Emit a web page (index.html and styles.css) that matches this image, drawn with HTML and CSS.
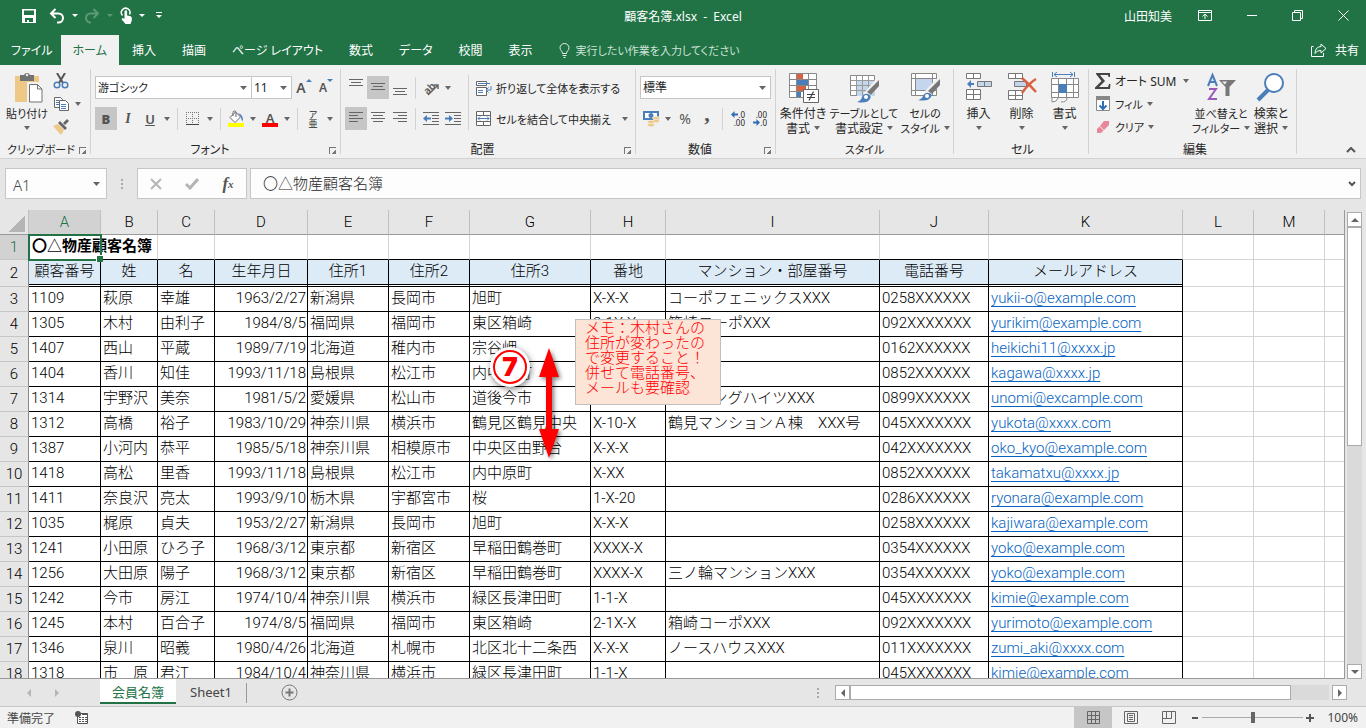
FILE: index.html
```html
<!DOCTYPE html>
<html lang="ja">
<head>
    <meta charset="UTF-8">
    <meta name="viewport" content="width=device-width, initial-scale=1.0">
    <title>顧客名簿.xlsx - Excel</title>
    <link rel="stylesheet" href="styles.css">
</head>
<body>
    <header class="titlebar">
        <div class="quick-access">
            <button class="qa-btn" aria-label="上書き保存"><svg width="16" height="16" viewBox="0 0 16 16"><path fill="#fff" fill-rule="evenodd" d="M1 1h14v14H1zM3 2.500v4.500h10V2.500zM4 10v4h2v-2h2v2h4v-4z"/></svg></button>
            <button class="qa-btn" aria-label="元に戻す"><svg width="16" height="16" viewBox="0 0 16 16" fill="none" stroke="#fff" stroke-width="2"><path d="M6.500 1 2 5.500 6.500 10M2 5.500h7.500a4.500 4.500 0 0 1 0 9H8"/></svg></button>
            <button class="caret-btn" aria-label="元に戻すの一覧"><span class="caret"></span></button>
            <button class="qa-btn" aria-label="やり直し" disabled><svg width="16" height="16" viewBox="0 0 16 16" fill="none" stroke="#5c9a78" stroke-width="2"><path d="M9.500 1 14 5.500 9.500 10M14 5.500H6.500a4.500 4.500 0 0 0 0 9H7"/></svg></button>
            <button class="caret-btn dim" aria-label="やり直しの一覧" disabled><span class="caret"></span></button>
            <button class="qa-btn qa-touch" aria-label="タッチ/マウス モード"><svg width="14" height="17" viewBox="0 0 14 17"><path d="M3.500 8.500A4.300 4.300 0 1 1 10.500 7.500" fill="none" stroke="#fff" stroke-width="1.500"/><path fill="#fff" d="M5.500 4.500a1.300 1.300 0 0 1 2.600 0V8.500l3.500.8q1.200.4 1.200 1.700V13.500L11.500 17H6.500L2.500 12.300l1-1.300 2 .8z"/></svg></button>
            <button class="caret-btn" aria-label="モードの一覧"><span class="caret"></span></button>
            <button class="qa-btn" aria-label="クイック アクセス ツール バーのユーザー設定"><svg width="6" height="7" viewBox="0 0 6 7"><path fill="#fff" d="M0 0h6v1H0zM0 3h6L3 6z"/></svg></button>
        </div>
        <h1 class="doc-title">顧客名簿.xlsx &nbsp;-&nbsp; Excel</h1>
        <div class="window-area">
            <span class="user">山田知美</span>
            <button class="win-btn" aria-label="リボンの表示オプション"><svg width="14" height="11" viewBox="0 0 14 11" fill="none" stroke="#fff"><path d="M.5.5h13v10H.5zM.5 2.500h13M7 9V4.500M4.500 6.500 7 4l2.500 2.500"/></svg></button>
            <button class="win-btn" aria-label="最小化"><svg width="11" height="11" viewBox="0 0 11 11" stroke="#fff"><path d="M1 5.500h10"/></svg></button>
            <button class="win-btn" aria-label="元に戻す（縮小）"><svg width="11" height="11" viewBox="0 0 11 11" fill="none" stroke="#fff"><path d="M.5 2.500h8v8h-8zM2.500 2V.5h8v8H9"/></svg></button>
            <button class="win-btn" aria-label="閉じる"><svg width="11" height="11" viewBox="0 0 11 11" stroke="#fff"><path d="M.5.5l10 10M10.500.5l-10 10"/></svg></button>
        </div>
    </header>

    <nav class="tabs">
        <button class="tab tab-file">ファイル</button>
        <button class="tab active">ホーム</button>
        <button class="tab">挿入</button>
        <button class="tab">描画</button>
        <button class="tab">ページ レイアウト</button>
        <button class="tab">数式</button>
        <button class="tab">データ</button>
        <button class="tab">校閲</button>
        <button class="tab">表示</button>
        <label class="tell-me">
            <svg width="11" height="15" viewBox="0 0 11 15" fill="none" stroke="#e4efe8"><path d="M3.500 10.500C3.500 8 1 7.500 1 4.800a4.500 4.300 0 0 1 9 0C10 7.500 7.500 8 7.500 10.500zM3.500 12.500h4M4.500 14.500h2"/></svg>
            <input type="text" placeholder="実行したい作業を入力してください" aria-label="実行したい作業を入力してください">
        </label>
        <button class="share"><svg width="16" height="14" viewBox="0 0 16 14" fill="none" stroke="#fff"><path d="M2.500 3.500H.5v10h12V10M10 1l5 4.500-5 4.500V7.500Q6 7 4 10.500 4 4 10 3.500z"/></svg>共有</button>
    </nav>

    <section class="ribbon">
        <div class="group g-clipboard">
            <div class="group-body">
                <button class="big-btn"><svg width="32" height="32" viewBox="0 0 32 32"><path fill="#eec887" d="M4 5h24v26H4z"/><path fill="#737373" d="M9 4h4a3.200 3.200 0 0 1 6 0h4v6H9z"/><circle cx="16" cy="4" r="1.200" fill="#f1f1f1"/><path fill="#f1f1f1" d="M16 11h16v21H16z"/><path d="M18.500 13.500h8l4.500 4.500v13H18.500zM26.500 13.500V18H31" fill="#fff" stroke="#737373"/></svg><span class="compact">貼り付け</span><span class="caret"></span></button>
                <div class="stack">
                    <div class="stack-row"><button class="tool" aria-label="切り取り"><svg width="16" height="16" viewBox="0 0 16 16" fill="none"><path stroke="#555" stroke-width="2" d="M4 0l6 10M12 0 6 10"/><g stroke="#4a7ebb" stroke-width="1.500"><circle cx="4" cy="12" r="2.800"/><circle cx="12" cy="12" r="2.800"/></g></svg></button></div>
                    <div class="stack-row"><button class="tool" aria-label="コピー"><svg width="16" height="16" viewBox="0 0 16 16" fill="#fff" stroke="#666"><path d="M1.500 1.500h6l2 2v8h-8z"/><path stroke="#4a7ebb" d="M3 4.500h3M3 6.500h3M3 8.500h3"/><path d="M6.500 4.500h6l3 3v7h-9z"/><path stroke="#4a7ebb" d="M8 8.500h5M8 10.500h5M8 12.500h5"/></svg></button><button class="caret-btn" aria-label="コピーの一覧"><span class="caret"></span></button></div>
                    <div class="stack-row"><button class="tool" aria-label="書式のコピー/貼り付け"><svg width="16" height="16" viewBox="0 0 16 16"><path fill="#eec887" d="M0 7l5-2 6 6-3 5z"/><path fill="#666" d="M5 4l2-2 7 7-2 2zM10 4l4-4 2 2-4 4z"/></svg></button></div>
                </div>
            </div>
            <div class="caption"><span class="compact">クリップボード</span><button class="launcher" aria-label="クリップボードの詳細"></button></div>
        </div>

        <div class="group g-font">
            <div class="group-body rows">
                <div class="row">
                    <select class="combo font-name" aria-label="フォント"><option>游ゴシック</option></select>
                    <select class="combo font-size" aria-label="フォント サイズ"><option>11</option></select>
                    <button class="tool letter grow" aria-label="フォント サイズの拡大">A<i class="tri up"></i></button>
                    <button class="tool letter shrink" aria-label="フォント サイズの縮小">A<i class="tri down"></i></button>
                </div>
                <div class="row">
                    <button class="tool letter pressed" aria-pressed="true"><b>B</b></button>
                    <button class="tool letter italic">I</button>
                    <button class="tool letter"><u>U</u></button>
                    <button class="caret-btn" aria-label="下線の一覧"><span class="caret"></span></button>
                    <span class="sep"></span>
                    <button class="tool" aria-label="罫線"><svg width="14" height="14" viewBox="0 0 14 14" fill="none" stroke="#777"><path stroke-dasharray="1 1" d="M.5 0v13M6.500 0v13M12.500 0v13M0 .5h13M0 6.500h13"/><path stroke="#444" d="M0 12.500h13"/></svg></button>
                    <button class="caret-btn" aria-label="罫線の一覧"><span class="caret"></span></button>
                    <span class="sep"></span>
                    <button class="tool" aria-label="塗りつぶしの色"><svg width="18" height="18" viewBox="0 0 18 18"><path d="M3 7.500 8.500 2l5 5-5.500 5.500zM6 6V2.500a1.500 1.500 0 0 1 3 0V7" fill="#fff" stroke="#666"/><path fill="#4a7ebb" d="M11 3q5 1 5 8-2-1-2-4z"/><path fill="#ff0" d="M1 13h16v4H1z"/></svg></button>
                    <button class="caret-btn" aria-label="塗りつぶしの色の一覧"><span class="caret"></span></button>
                    <button class="tool letter font-color" aria-label="フォントの色">A</button>
                    <button class="caret-btn" aria-label="フォントの色の一覧"><span class="caret"></span></button>
                    <span class="sep"></span>
                    <button class="tool ruby">ア<br>亜</button>
                    <button class="caret-btn" aria-label="ふりがなの一覧"><span class="caret"></span></button>
                </div>
            </div>
            <div class="caption"><span>フォント</span><button class="launcher" aria-label="フォントの詳細"></button></div>
        </div>

        <div class="group g-align">
            <div class="group-body">
                <div class="rows">
                    <div class="row">
                        <button class="tool" aria-label="上揃え"><svg width="14" height="18" viewBox="0 0 14 18" stroke="#666"><path d="M0 .5h14M2 3.500h10M0 6.500h14"/></svg></button>
                        <button class="tool pressed" aria-label="上下中央揃え"><svg width="14" height="18" viewBox="0 0 14 18" stroke="#666"><path d="M0 4.500h14M2 7.500h10M0 10.500h14"/></svg></button>
                        <button class="tool" aria-label="下揃え"><svg width="14" height="18" viewBox="0 0 14 18" stroke="#666"><path d="M0 9.500h14M2 12.500h10M0 15.500h14"/></svg></button>
                        <span class="sep"></span>
                        <button class="tool" aria-label="方向"><svg width="18" height="16" viewBox="0 0 18 16"><text x="1" y="12" font-size="10" font-weight="600" font-family="Noto Sans" fill="#555" transform="rotate(-45 7 8)">ab</text><path d="M6 15 15 6M12 5h4v4" fill="none" stroke="#666" stroke-width="1.500"/></svg></button>
                        <button class="caret-btn" aria-label="方向の一覧"><span class="caret"></span></button>
                    </div>
                    <div class="row">
                        <button class="tool pressed" aria-label="左揃え"><svg width="14" height="13" viewBox="0 0 14 13" stroke="#666"><path d="M0 .5h14M0 3.500h9M0 6.500h14M0 9.500h9"/></svg></button>
                        <button class="tool" aria-label="中央揃え"><svg width="14" height="13" viewBox="0 0 14 13" stroke="#666"><path d="M0 .5h14M2 3.500h10M0 6.500h14M2 9.500h10"/></svg></button>
                        <button class="tool" aria-label="右揃え"><svg width="14" height="13" viewBox="0 0 14 13" stroke="#666"><path d="M0 .5h14M5 3.500h9M0 6.500h14M5 9.500h9"/></svg></button>
                        <span class="sep"></span>
                        <button class="tool" aria-label="インデントを減らす"><svg width="16" height="14" viewBox="0 0 16 14" stroke="#666"><path d="M0 .5h16M9 3.500h7M9 6.500h7M9 9.500h7M0 12.500h16"/><path stroke="none" fill="#4a7ebb" d="M0 6.500 4 3v2.500h4v2H4V10z"/></svg></button>
                        <button class="tool" aria-label="インデントを増やす"><svg width="16" height="14" viewBox="0 0 16 14" stroke="#666"><path d="M0 .5h16M9 3.500h7M9 6.500h7M9 9.500h7M0 12.500h16"/><path stroke="none" fill="#4a7ebb" d="M8 6.500 4 3v2.500H0v2h4V10z"/></svg></button>
                    </div>
                </div>
                <span class="sep tall"></span>
                <div class="rows">
                    <button class="text-btn"><svg width="16" height="16" viewBox="0 0 16 16" fill="none" stroke="#666"><path d="M.5 1.500h10v4H.5zM.5 7.500h10v8H.5z" fill="#fff"/><path stroke="#4a7ebb" d="M2 3.500h12M2 10.500h5M2 12.500h5M15 6v4h-5M12.500 7.500 10 10l2.500 2.500"/></svg>折り返して全体を表示する</button>
                    <div class="row">
                        <button class="text-btn"><svg width="16" height="16" viewBox="0 0 16 16" fill="#fff" stroke="#666"><path d="M.5.5h14v14H.5zM7.500.5v4M7.500 11v4M.5 4.500h14M.5 10.500h14"/><path fill="none" stroke="#4a7ebb" d="M2 7.500h11M4 5.500l-2 2 2 2M11 5.500l2 2-2 2"/></svg>セルを結合して中央揃え</button>
                        <button class="caret-btn" aria-label="結合の一覧"><span class="caret"></span></button>
                    </div>
                </div>
            </div>
            <div class="caption"><span>配置</span><button class="launcher" aria-label="配置の詳細"></button></div>
        </div>

        <div class="group g-number">
            <div class="group-body rows">
                <div class="row"><select class="combo number-format" aria-label="表示形式"><option>標準</option></select></div>
                <div class="row">
                    <button class="tool" aria-label="通貨表示形式"><svg width="17" height="17" viewBox="0 0 17 17"><path fill="#4a7ebb" d="M0 1h16v9H0z"/><path fill="#fff" d="M2 3h12v5H2z"/><circle cx="8" cy="5.500" r="2.500" fill="#4a7ebb"/><g fill="#eec887" stroke="#f1f1f1" stroke-width=".6"><ellipse cx="13" cy="8" rx="3.500" ry="1.700"/><ellipse cx="13" cy="11" rx="3.500" ry="1.700"/><ellipse cx="8" cy="12" rx="3.500" ry="1.700"/><ellipse cx="8" cy="15" rx="3.500" ry="1.700"/></g></svg></button>
                    <button class="caret-btn" aria-label="通貨の一覧"><span class="caret"></span></button>
                    <button class="tool percent">%</button>
                    <button class="tool comma">,</button>
                    <span class="sep"></span>
                    <button class="tool decimals" aria-label="小数点以下の表示桁数を増やす"><span class="with-arrow"><svg width="7" height="7" viewBox="0 0 7 7"><path fill="#2f6eb5" d="M0 3.500 3.500 0v2.500H7v2H3.500V7z"/></svg>.0</span><span>.00</span></button>
                    <button class="tool decimals" aria-label="小数点以下の表示桁数を減らす"><span>.00</span><span class="with-arrow"><svg width="7" height="7" viewBox="0 0 7 7"><path fill="#2f6eb5" d="M7 3.500 3.500 0v2.500H0v2h3.500V7z"/></svg>.0</span></button>
                </div>
            </div>
            <div class="caption"><span>数値</span><button class="launcher" aria-label="表示形式の詳細"></button></div>
        </div>

        <div class="group g-style">
            <div class="group-body">
                <button class="big-btn"><svg width="32" height="32" viewBox="0 0 32 32"><path fill="#fff" stroke="#888" d="M2.500 2.500h27v24h-27zM9.500 2.500v24M21.500 2.500v24M2.500 8.500h27M2.500 14.500h27M2.500 20.500h27"/><path fill="#d9633f" d="M10 3h6v5h-6zM10 15h9v5h-9z"/><path fill="#4a7ebb" d="M10 9h11v5H10zM10 21h4v5h-4z"/><path fill="#fff" stroke="#666" d="M16.500 18.500h15v13h-15z"/><path stroke="#444" stroke-width="1.200" d="M20 23.500h8M20 26.500h8M26.500 20.500l-4.500 9"/></svg><span>条件付き</span><span>書式<span class="caret"></span></span></button>
                <button class="big-btn wide"><svg width="32" height="32" viewBox="0 0 32 32"><path fill="#fff" stroke="#888" d="M2.500 4.500h24v20h-24z"/><path fill="#c3d6ec" d="M9 10h18v15H9z"/><path fill="none" stroke="#999" d="M2.500 9.500h24M2.500 14.500h24M2.500 19.500h24M8.500 4.500v20M14.500 4.500v20M20.500 4.500v20"/><path stroke="#f1f1f1" stroke-width="7" d="M30 11 18 25"/><path fill="#777" d="M31 9v6l-8 9-4-3z"/><path fill="#4a7ebb" d="M9 31q4-1 5-5 2-4 6-3t2 5q-3 5-13 3z"/><circle cx="18" cy="26" r="2" fill="#fff"/></svg><span class="compact">テーブルとして</span><span>書式設定<span class="caret"></span></span></button>
                <button class="big-btn"><svg width="32" height="32" viewBox="0 0 32 32"><path fill="#fff" stroke="#888" d="M2.500 2.500h25v22h-25zM6.500 2.500v22M23.500 2.500v22M2.500 7.500h25M2.500 19.500h25"/><path fill="#c3d6ec" d="M7 8h16v11H7z"/><path stroke="#f1f1f1" stroke-width="7" d="M30 10 18 23"/><path fill="#777" d="M31 8v6l-8 9-4-3z"/><path fill="#4a7ebb" d="M9 29q4-1 5-4 2-4 6-3t2 4q-3 5-13 3z"/><circle cx="18" cy="25" r="2" fill="#fff"/></svg><span class="compact">セルの</span><span class="compact">スタイル<span class="caret"></span></span></button>
            </div>
            <div class="caption"><span class="compact">スタイル</span></div>
        </div>

        <div class="group g-cells">
            <div class="group-body">
                <button class="big-btn"><svg width="32" height="32" viewBox="0 0 32 32" fill="#fff" stroke="#777"><path d="M3.500 2.500h14v5h-14zM10.500 2.500v5M3.500 18.500h14v10h-14zM10.500 18.500v10M3.500 23.500h14"/><path fill="#c3d6ec" d="M14.500 10.500h14v5h-14zM21.500 10.500v5"/><path fill="#4a7ebb" stroke="none" d="M4 13l4-4v3h3v2H8v3z"/></svg><span>挿入</span><span class="caret"></span></button>
                <button class="big-btn"><svg width="32" height="32" viewBox="0 0 32 32" fill="#fff" stroke="#777"><path d="M2.500 2.500h14v5h-14zM9.500 2.500v5M2.500 19.500h14v9h-14zM9.500 19.500v9M2.500 24.500h14"/><path fill="#c3d6ec" d="M8.500 10.500h12v5h-12z"/><path stroke="#d9633f" stroke-width="2.500" d="M16 7q7 6 14 14M30 8q-7 4-14 14"/></svg><span>削除</span><span class="caret"></span></button>
                <button class="big-btn"><svg width="32" height="32" viewBox="0 0 32 32" fill="#fff" stroke="#888"><path fill="none" stroke="#4a7ebb" d="M3.500 1v5M25.500 1v5M5 3.500h19M8 1 5 3.500 8 6M21 1l3 2.500L21 6"/><path d="M2.500 7.500h27v19h-27zM9.500 7.500v19M17.500 7.500v19M24.500 7.500v19M2.500 13.500h27M2.500 21.500h27M3 27v4q5 0 6-4M12 31q6 0 6-4"/><path fill="#4a7ebb" stroke="none" d="M10 13h8v9h-8z"/></svg><span>書式</span><span class="caret"></span></button>
            </div>
            <div class="caption"><span>セル</span></div>
        </div>

        <div class="group g-edit">
            <div class="group-body">
                <div class="stack">
                    <button class="stack-row line-btn"><svg width="16" height="16" viewBox="0 0 16 16"><path fill="#444" d="M1 0h14v4h-1.500L13 2H5l5 6-6 6h9l1-3h1.500L15 16H0v-1.500L6.500 8 1 1z"/></svg><span>オート SUM</span><span class="caret"></span></button>
                    <button class="stack-row line-btn short"><svg width="16" height="16" viewBox="0 0 16 16"><path fill="#fff" stroke="#888" d="M1.500 3.500h13v11h-13z"/><path fill="#888" d="M1 0h14v4H1z"/><path fill="none" stroke="#2f6eb5" stroke-width="2" d="M8 5v8M4.500 9.500 8 13l3.500-3.500"/></svg><span class="compact">フィル</span><span class="caret"></span></button>
                    <button class="stack-row line-btn short"><svg width="16" height="16" viewBox="0 0 16 16"><path fill="#e8869a" d="M9 2h5v4l-5 5-4-4z"/><path fill="#e8869a" d="M4.500 7.500 8.500 11.500 6 14H2v-4z"/></svg><span class="compact">クリア</span><span class="caret"></span></button>
                </div>
                <button class="big-btn sort"><svg width="32" height="32" viewBox="0 0 32 32"><g fill="none" stroke-width="2"><path stroke="#4a7ebb" d="M3 15 7.500 4 12 15M4.500 11h6"/><path stroke="#9a5bb8" d="M4 18h7l-7 10h8"/></g><path fill="#777" d="M14 9h17l-6.500 7v9h-4v-9z"/><path fill="#f1f1f1" d="M17 10.500h5l-2 3z"/></svg><span class="compact">並べ替えと</span><span class="compact">フィルター<span class="caret"></span></span></button>
                <button class="big-btn find"><svg width="32" height="32" viewBox="0 0 32 32"><path stroke="#4a7ebb" stroke-width="4" d="M3 29 13 19"/><circle cx="19" cy="12" r="9" fill="#fff" stroke="#4a7ebb" stroke-width="2"/></svg><span>検索と</span><span>選択<span class="caret"></span></span></button>
            </div>
            <div class="caption"><span>編集</span></div>
        </div>
        <button class="collapse" aria-label="リボンを折りたたむ"><svg width="10" height="6" viewBox="0 0 10 6" fill="none" stroke="#555" stroke-width="2"><path d="M1 5l4-4 4 4"/></svg></button>
    </section>

    <div class="formula-bar">
        <select class="name-box" aria-label="名前ボックス"><option>A1</option></select>
        <span class="dots"></span>
        <div class="fx-box">
            <button aria-label="キャンセル"><svg width="12" height="12" viewBox="0 0 12 12" stroke="#b5b5b5" stroke-width="2"><path d="M1 1l10 10M11 1 1 11"/></svg></button>
            <button aria-label="入力"><svg width="14" height="12" viewBox="0 0 14 12" fill="none" stroke="#b5b5b5" stroke-width="3"><path d="M1 6l4 4 8-9"/></svg></button>
            <button class="fx" aria-label="関数の挿入">f<small>x</small></button>
        </div>
        <div class="formula-box">
            <input type="text" value="〇△物産顧客名簿" aria-label="数式バー">
            <button aria-label="数式バーの展開"><svg width="8" height="6" viewBox="0 0 8 6" fill="none" stroke="#555" stroke-width="2"><path d="M1 1l3 3 3-3"/></svg></button>
        </div>
    </div>

    <main class="workspace">
        <div class="sheet">
            <table class="grid">
                <colgroup>
                    <col class="c-head"><col class="c-a"><col class="c-b"><col class="c-b"><col class="c-d"><col class="c-e"><col class="c-e"><col class="c-g"><col class="c-h"><col class="c-i"><col class="c-j"><col class="c-k"><col class="c-l"><col class="c-l"><col>
                </colgroup>
                <thead>
                    <tr><th class="corner"></th><th class="on">A</th><th>B</th><th>C</th><th>D</th><th>E</th><th>F</th><th>G</th><th>H</th><th>I</th><th>J</th><th>K</th><th>L</th><th>M</th><th></th></tr>
                </thead>
                <tbody>
                    <tr class="title-row"><th class="on">1</th><td class="selected">〇△物産顧客名簿</td><td></td><td></td><td></td><td></td><td></td><td></td><td></td><td></td><td></td><td></td><td></td><td></td><td></td></tr>
                    <tr class="field-row"><th>2</th><td>顧客番号</td><td>姓</td><td>名</td><td>生年月日</td><td>住所1</td><td>住所2</td><td>住所3</td><td>番地</td><td>マンション・部屋番号</td><td>電話番号</td><td>メールアドレス</td><td></td><td></td><td></td></tr>
                    <tr><th>3</th><td>1109</td><td>萩原</td><td>幸雄</td><td>1963/2/27</td><td>新潟県</td><td>長岡市</td><td>旭町</td><td>X-X-X</td><td>コーポフェニックスXXX</td><td>0258XXXXXX</td><td><a href="mailto:yukii-o@example.com">yukii-o@example.com</a></td><td></td><td></td><td></td></tr>
                    <tr><th>4</th><td>1305</td><td>木村</td><td>由利子</td><td>1984/8/5</td><td>福岡県</td><td>福岡市</td><td>東区箱崎</td><td>2-1X-X</td><td>箱崎コーポXXX</td><td>092XXXXXXX</td><td><a href="mailto:yurikim@example.com">yurikim@example.com</a></td><td></td><td></td><td></td></tr>
                    <tr><th>5</th><td>1407</td><td>西山</td><td>平蔵</td><td>1989/7/19</td><td>北海道</td><td>稚内市</td><td>宗谷岬</td><td></td><td></td><td>0162XXXXXX</td><td><a href="mailto:heikichi11@xxxx.jp">heikichi11@xxxx.jp</a></td><td></td><td></td><td></td></tr>
                    <tr><th>6</th><td>1404</td><td>香川</td><td>知佳</td><td>1993/11/18</td><td>島根県</td><td>松江市</td><td>内中原町</td><td></td><td></td><td>0852XXXXXX</td><td><a href="mailto:kagawa@xxxx.jp">kagawa@xxxx.jp</a></td><td></td><td></td><td></td></tr>
                    <tr><th>7</th><td>1314</td><td>宇野沢</td><td>美奈</td><td>1981/5/2</td><td>愛媛県</td><td>松山市</td><td>道後今市</td><td></td><td>バイキングハイツXXX</td><td>0899XXXXXX</td><td><a href="mailto:unomi@excample.com">unomi@excample.com</a></td><td></td><td></td><td></td></tr>
                    <tr><th>8</th><td>1312</td><td>高橋</td><td>裕子</td><td>1983/10/29</td><td>神奈川県</td><td>横浜市</td><td>鶴見区鶴見中央</td><td>X-10-X</td><td>鶴見マンションＡ棟　XXX号</td><td>045XXXXXXX</td><td><a href="mailto:yukota@xxxx.com">yukota@xxxx.com</a></td><td></td><td></td><td></td></tr>
                    <tr><th>9</th><td>1387</td><td>小河内</td><td>恭平</td><td>1985/5/18</td><td>神奈川県</td><td>相模原市</td><td>中央区由野台</td><td>X-X-X</td><td></td><td>042XXXXXXX</td><td><a href="mailto:oko_kyo@example.com">oko_kyo@example.com</a></td><td></td><td></td><td></td></tr>
                    <tr><th>10</th><td>1418</td><td>高松</td><td>里香</td><td>1993/11/18</td><td>島根県</td><td>松江市</td><td>内中原町</td><td>X-XX</td><td></td><td>0852XXXXXX</td><td><a href="mailto:takamatxu@xxxx.jp">takamatxu@xxxx.jp</a></td><td></td><td></td><td></td></tr>
                    <tr><th>11</th><td>1411</td><td>奈良沢</td><td>亮太</td><td>1993/9/10</td><td>栃木県</td><td>宇都宮市</td><td>桜</td><td>1-X-20</td><td></td><td>0286XXXXXX</td><td><a href="mailto:ryonara@example.com">ryonara@example.com</a></td><td></td><td></td><td></td></tr>
                    <tr><th>12</th><td>1035</td><td>梶原</td><td>貞夫</td><td>1953/2/27</td><td>新潟県</td><td>長岡市</td><td>旭町</td><td>X-X-X</td><td></td><td>0258XXXXXX</td><td><a href="mailto:kajiwara@example.com">kajiwara@example.com</a></td><td></td><td></td><td></td></tr>
                    <tr><th>13</th><td>1241</td><td>小田原</td><td>ひろ子</td><td>1968/3/12</td><td>東京都</td><td>新宿区</td><td>早稲田鶴巻町</td><td>XXXX-X</td><td></td><td>0354XXXXXX</td><td><a href="mailto:yoko@example.com">yoko@example.com</a></td><td></td><td></td><td></td></tr>
                    <tr><th>14</th><td>1256</td><td>大田原</td><td>陽子</td><td>1968/3/12</td><td>東京都</td><td>新宿区</td><td>早稲田鶴巻町</td><td>XXXX-X</td><td>三ノ輪マンションXXX</td><td>0354XXXXXX</td><td><a href="mailto:yoko@example.com">yoko@example.com</a></td><td></td><td></td><td></td></tr>
                    <tr><th>15</th><td>1242</td><td>今市</td><td>房江</td><td>1974/10/4</td><td>神奈川県</td><td>横浜市</td><td>緑区長津田町</td><td>1-1-X</td><td></td><td>045XXXXXXX</td><td><a href="mailto:kimie@example.com">kimie@example.com</a></td><td></td><td></td><td></td></tr>
                    <tr><th>16</th><td>1245</td><td>本村</td><td>百合子</td><td>1974/8/5</td><td>福岡県</td><td>福岡市</td><td>東区箱崎</td><td>2-1X-X</td><td>箱崎コーポXXX</td><td>092XXXXXXX</td><td><a href="mailto:yurimoto@example.com">yurimoto@example.com</a></td><td></td><td></td><td></td></tr>
                    <tr><th>17</th><td>1346</td><td>泉川</td><td>昭義</td><td>1980/4/26</td><td>北海道</td><td>札幌市</td><td>北区北十二条西</td><td>X-X-X</td><td>ノースハウスXXX</td><td>011XXXXXXX</td><td><a href="mailto:zumi_aki@xxxx.com">zumi_aki@xxxx.com</a></td><td></td><td></td><td></td></tr>
                    <tr><th>18</th><td>1318</td><td>市　原</td><td>君江</td><td>1984/10/4</td><td>神奈川県</td><td>横浜市</td><td>緑区長津田町</td><td>1-1-X</td><td></td><td>045XXXXXXX</td><td><a href="mailto:kimie@example.com">kimie@example.com</a></td><td></td><td></td><td></td></tr>
                </tbody>
            </table>
            <!-- 図形: メモ・番号・矢印 -->
            <div class="memo">メモ：木村さんの<br>住所が変わったの<br>で変更すること！<br>併せて電話番号、<br>メールも要確認</div>
            <div class="step-badge">7</div>
            <svg class="move-arrow" width="24" height="112" viewBox="0 0 24 112"><path fill="#f00" d="M12 1l10 29h-7v52h7L12 111 2 82h7V30H2z"/></svg>
        </div>
        <div class="vscroll">
            <button class="scroll-btn" aria-label="上へ"><i class="arrow-up"></i></button>
            <div class="track"><div class="thumb"></div></div>
            <button class="scroll-btn" aria-label="下へ"><i class="arrow-down"></i></button>
        </div>
    </main>

    <div class="sheet-bar">
        <div class="sheet-nav">
            <button aria-label="前のシート"><i class="arrow-left"></i></button>
            <button aria-label="次のシート"><i class="arrow-right"></i></button>
        </div>
        <button class="sheet-tab active">会員名簿</button>
        <button class="sheet-tab">Sheet1</button>
        <span class="sheet-sep"></span>
        <button class="add-sheet" aria-label="新しいシート"><svg width="17" height="17" viewBox="0 0 17 17" fill="none" stroke="#777"><circle cx="8.500" cy="8.500" r="7.500"/><path stroke-width="2" d="M8.500 4.500v8M4.500 8.500h8"/></svg></button>
        <span class="dots"></span>
        <div class="hscroll">
            <button class="scroll-btn" aria-label="左へ"><i class="arrow-left"></i></button>
            <div class="track"><div class="thumb"></div></div>
            <button class="scroll-btn" aria-label="右へ"><i class="arrow-right"></i></button>
        </div>
    </div>

    <footer class="status-bar">
        <span>準備完了</span>
        <button class="macro" aria-label="マクロの記録"><svg width="14" height="13" viewBox="0 0 14 13"><path fill="#fff" stroke="#555" d="M2.500 2.500h10v10h-10z"/><path stroke="#555" d="M4 6.500h2M7 6.500h2M10 6.500h2M4 8.500h2M7 8.500h2M10 8.500h2M4 10.500h2M7 10.500h2M10 10.500h2M7 3.500h5"/><circle cx="3" cy="3" r="3" fill="#555"/></svg></button>
        <div class="views">
            <button class="view active" aria-label="標準"><svg width="13" height="13" viewBox="0 0 13 13" fill="none" stroke="#666"><path d="M.5.5h12v12H.5zM4.500.5v12M8.500.5v12M.5 4.500h12M.5 8.500h12"/></svg></button>
            <button class="view" aria-label="ページ レイアウト"><svg width="14" height="13" viewBox="0 0 14 13" fill="none" stroke="#666"><path d="M.5.5h13v12H.5zM3.500 2.500h7v8h-7zM5 4.500h4M5 6.500h4M5 8.500h4"/></svg></button>
            <button class="view" aria-label="改ページ プレビュー"><svg width="14" height="13" viewBox="0 0 14 13" fill="none" stroke="#666"><path d="M.5.5h13v12H.5zM4.500.5v7M.5 7.500h9M9.500.5v7"/></svg></button>
        </div>
        <div class="zoom">
            <button aria-label="縮小"><svg width="8" height="8" viewBox="0 0 8 8" stroke="#555" stroke-width="2"><path d="M1 4h6"/></svg></button>
            <input type="range" min="0" max="100" value="50" aria-label="ズーム">
            <button aria-label="拡大"><svg width="8" height="8" viewBox="0 0 8 8" stroke="#555" stroke-width="2"><path d="M0 4h8M4 0v8"/></svg></button>
            <span class="zoom-value">100%</span>
        </div>
    </footer>
</body>
</html>
```

FILE: styles.css
```css
* {
    box-sizing: border-box;
    margin: 0;
    padding: 0;
}

body {
    display: flex;
    flex-direction: column;
    height: 100vh;
    overflow: hidden;
    font-family: "Noto Sans", "Noto Sans CJK JP", sans-serif;
    font-size: 12px;
    font-feature-settings: "palt";
    color: #262626;
    background-color: #e6e6e6;
}

button, input, select {
    font: inherit;
    font-feature-settings: inherit;
    color: inherit;
    border: none;
    background: none;
}

button {
    display: flex;
    align-items: center;
    justify-content: center;
    white-space: nowrap;
}

svg {
    display: block;
    flex: none;
}

.compact {
    font-size: 11px;
}

/* タイトル バー */
.titlebar {
    display: grid;
    grid-template-columns: 1fr auto 1fr;
    align-items: center;
    height: 35px;
    padding-bottom: 4px;
    background-color: #217346;
    color: #fff;
}

.quick-access {
    display: flex;
    align-items: center;
    padding-left: 18px;
}

.qa-btn {
    width: 22px;
    height: 24px;
    margin-right: 1px;
}

.qa-btn:first-child {
    margin-right: 6px;
}

.qa-touch {
    width: 20px;
    margin: 0;
}

.doc-title {
    font-size: 12px;
    font-weight: 400;
}

.window-area {
    display: flex;
    align-items: center;
    justify-content: flex-end;
}

.user {
    margin-right: 10px;
}

.win-btn {
    width: 46px;
    height: 30px;
}

.caret {
    display: inline-block;
    border: 3px solid transparent;
    border-top: 4px solid #666;
    border-bottom: none;
}

.titlebar .caret {
    border-top: 3px solid #fff;
}

.titlebar .dim .caret {
    border-top-color: #5c9a78;
}

.caret-btn {
    width: 12px;
    height: 23px;
}

/* リボンのタブ */
.tabs {
    display: flex;
    height: 30px;
    background-color: #217346;
    color: #fff;
}

.tab {
    padding: 0 13px 1px;
}

.tab-file {
    padding: 0 8px 1px 11px;
}

.tab.active {
    padding: 0 12px 1px;
    background-color: #f1f1f1;
    color: #217346;
}

.tell-me {
    display: flex;
    flex: 1;
    align-items: center;
    gap: 6px;
    padding-left: 13px;
    font-size: 11px;
}

.tell-me input {
    width: 240px;
    outline: none;
}

.tell-me input::placeholder {
    color: #cfe2d7;
}

.share {
    gap: 8px;
    padding-right: 7px;
}

/* リボン */
.ribbon {
    display: flex;
    padding: 4px 0;
    background-color: #f1f1f1;
    border-bottom: 1px solid #d2d2d2;
}

.group {
    display: flex;
    flex: none;
    flex-direction: column;
    justify-content: space-between;
    height: 85px;
    border-right: 1px solid #d2d2d2;
}

.g-clipboard {
    width: 91px;
    padding-left: 4px;
}

.g-font {
    width: 250px;
    padding-left: 4px;
}

.g-align {
    width: 295px;
    padding-left: 4px;
}

.g-number {
    width: 140px;
    padding-left: 4px;
}

.g-style {
    width: 178px;
}

.g-cells {
    width: 135px;
    padding-left: 3px;
}

.g-edit {
    width: 208px;
    padding-left: 5px;
}

.group-body {
    display: flex;
}

.rows {
    display: flex;
    flex-direction: column;
    gap: 8px;
    padding-top: 7px;
}

.g-align .rows {
    align-items: flex-start;
}

.row {
    display: flex;
    align-items: center;
    height: 23px;
}

.caption {
    display: flex;
    justify-content: center;
    height: 12px;
    line-height: 16px;
}

.caption span {
    flex: 1;
    text-align: center;
    white-space: nowrap;
}

.launcher {
    width: 7px;
    height: 7px;
    margin: 5px 4px 0 4px;
    border-top: 1px solid #777;
    border-left: 1px solid #777;
    background: linear-gradient(135deg, transparent 60%, #777 60%);
}

.g-clipboard .launcher {
    margin-left: 1px;
}

.tool {
    flex: none;
    width: 22px;
    height: 23px;
}

.tool.pressed {
    background-color: #c6c6c6;
}

.sep {
    width: 1px;
    height: 22px;
    margin: 0 4px;
    background-color: #d2d2d2;
}

.sep.tall {
    height: 55px;
    margin-top: 6px;
}

.combo, .name-box {
    appearance: none;
    background: #fff url("data:image/svg+xml,%3Csvg xmlns='http://www.w3.org/2000/svg' width='7' height='4'%3E%3Cpath fill='%23666' d='M0 0h7L3.500 4z'/%3E%3C/svg%3E") no-repeat right 4px center;
    border: 1px solid #c6c6c6;
}

.combo {
    height: 23px;
    padding: 0 2px;
}

.font-name {
    width: 157px;
    font-size: 11px;
}

.font-size {
    width: 41px;
    margin-left: -1px;
    margin-right: 1px;
}

.number-format {
    width: 131px;
}

.letter {
    font-size: 13px;
    font-weight: 600;
    color: #555;
}

.grow {
    font-size: 14px;
}

.shrink {
    font-size: 12px;
}

.tri {
    align-self: flex-start;
    margin-top: 3px;
    border: 3px solid transparent;
}

.tri.up {
    border-top: none;
    border-bottom: 3px solid #4a7ebb;
}

.tri.down {
    border-bottom: none;
    border-top: 3px solid #4a7ebb;
}

.italic {
    font-family: "Liberation Serif", serif;
    font-size: 14px;
    font-style: italic;
    font-weight: 700;
}

.font-color {
    height: 17px;
    line-height: 15px;
    border: solid transparent;
    border-width: 0 3px;
    background: linear-gradient(#f00, #f00) no-repeat center bottom / 16px 4px;
}

.ruby {
    font-size: 9px;
    line-height: 9px;
}

.percent {
    font-size: 14px;
    color: #555;
}

.comma {
    padding-bottom: 10px;
    font-family: "Liberation Serif", serif;
    font-size: 22px;
    font-weight: 700;
    color: #555;
}

.decimals {
    flex-direction: column;
    align-items: flex-end;
    padding-right: 4px;
    font-size: 8px;
    line-height: 8px;
}

.with-arrow {
    display: flex;
    align-items: center;
}

.text-btn {
    gap: 4px;
    height: 23px;
    padding-left: 3px;
    font-size: 11px;
}

.text-btn + .caret-btn {
    margin-left: 8px;
}

.big-btn {
    flex-direction: column;
    justify-content: flex-start;
    width: 46px;
    padding-top: 2px;
    line-height: 15px;
}

.big-btn svg {
    margin-bottom: 3px;
}

.big-btn > .caret {
    margin-top: 5px;
}

.big-btn span .caret {
    margin-left: 4px;
    vertical-align: 3px;
}

.g-style .big-btn {
    width: 54px;
}

.g-style .wide {
    width: 68px;
}

.g-cells .big-btn {
    width: 43px;
}

.g-edit .sort {
    width: 54px;
}

.stack {
    display: flex;
    flex: none;
    flex-direction: column;
}

.stack-row {
    display: flex;
    align-items: center;
    height: 23px;
}

.g-edit .stack {
    width: 100px;
}

.line-btn {
    justify-content: space-between;
    gap: 4px;
    padding: 0 5px 0 1px;
}

.line-btn span:nth-child(2) {
    flex: 1;
    text-align: left;
}

.line-btn.short span:nth-child(2) {
    flex: none;
}

.line-btn.short {
    justify-content: flex-start;
}

.collapse {
    align-self: flex-end;
    margin-left: auto;
    padding: 0 10px 1px;
}

/* 数式バー */
.formula-bar {
    display: flex;
    align-items: center;
    flex: none;
    height: 51px;
    padding: 0 5px 2px;
}

.name-box {
    width: 102px;
    height: 31px;
    padding: 2px 7px 0;
    background-color: #fdfdfd;
    background-position: right 6px center;
    font-size: 15px;
    font-weight: 300;
    color: #444;
}

.dots {
    width: 2px;
    height: 10px;
    background: repeating-linear-gradient(#aaa 0 2px, transparent 2px 4px);
}

.formula-bar .dots {
    margin: 0 14px;
}

.fx-box, .formula-box {
    display: flex;
    align-items: center;
    height: 31px;
    background-color: #fdfdfd;
    border: 1px solid #c6c6c6;
}

.fx-box {
    width: 110px;
    margin-right: 3px;
}

.fx-box button {
    width: 36px;
}

.fx {
    font-family: "Liberation Serif", serif;
    font-size: 17px;
    font-style: italic;
    font-weight: 700;
    color: #555;
}

.fx small {
    font-size: 11px;
}

.formula-box {
    flex: 1;
}

.formula-box input {
    flex: 1;
    padding: 0 0 2px 12px;
    font-family: "Roboto", "Noto Sans CJK JP", sans-serif;
    font-feature-settings: normal;
    font-size: 15px;
    font-weight: 300;
    outline: none;
}

.formula-box button {
    width: 16px;
}

/* シート */
.workspace {
    display: flex;
    flex: 1;
    min-height: 0;
}

.sheet {
    position: relative;
    flex: 1;
    min-width: 0;
    overflow: hidden;
    border-right: 1px solid #999;
    border-bottom: 1px solid #999;
    background-color: #fff;
    font-family: "Roboto", "Noto Sans CJK JP", sans-serif;
    font-feature-settings: normal;
    font-size: 15px;
    font-weight: 300;
    line-height: 20px;
    color: #000;
}

.grid {
    width: 100%;
    table-layout: fixed;
    border-collapse: separate;
    border-spacing: 0;
}

.c-head { width: 29px; }
.c-a { width: 72px; }
.c-b { width: 57px; }
.c-d { width: 93px; }
.c-e { width: 81px; }
.c-g { width: 121px; }
.c-h { width: 75px; }
.c-i { width: 214px; }
.c-j { width: 109px; }
.c-k { width: 194px; }
.c-l { width: 71px; }

.grid th {
    height: 25px;
    background-color: #e6e6e6;
    border-right: 1px solid #c0c0c0;
    border-bottom: 1px solid #999;
    font-weight: 300;
    color: #000;
}

.grid tbody th {
    border-right-color: #888;
    border-bottom-color: #c6c6c6;
}

.grid th:last-child {
    border-right: none;
}

.grid th.on {
    background-color: #d2d2d2;
    color: #217346;
}

.grid .corner {
    background: #e6e6e6 linear-gradient(135deg, transparent 50%, #b5b5b5 50%) no-repeat 8px 5px / 17px 17px;
}

.grid td {
    height: 25px;
    padding: 0 2px 2px;
    border-right: 1px solid #000;
    border-bottom: 1px solid #000;
    white-space: nowrap;
}

.grid td:nth-child(5) {
    padding-right: 1px;
    text-align: right;
}

.grid td:nth-child(n+13) {
    border-color: #d4d4d4;
}

.grid td:last-child {
    border-right: none;
}

.title-row td {
    border-right-color: #d4d4d4;
}

.grid .selected {
    position: relative;
    padding-left: 3px;
    outline: 2px solid #217346;
    outline-offset: -1px;
    font-weight: 700;
}

.selected::after {
    content: "";
    position: absolute;
    right: -3px;
    bottom: -3px;
    width: 6px;
    height: 6px;
    background-color: #217346;
    border: solid #fff;
    border-width: 1px 0 0 1px;
}

.grid .field-row td {
    height: 27px;
    text-align: center;
}

.field-row td:nth-child(-n+12) {
    background-color: #ddebf7;
    background-clip: padding-box;
    border-bottom: 3px double #000;
}

.grid a {
    color: #0563c1;
    text-underline-offset: 3px;
}

/* シート上の図形 */
.memo {
    position: absolute;
    left: 575px;
    top: 109px;
    width: 146px;
    height: 86px;
    padding: 1px 9px;
    background-color: #fce4d6;
    border: 1px solid #bfbfbf;
    line-height: 15px;
    white-space: nowrap;
    color: #f00;
}

.step-badge {
    position: absolute;
    left: 493px;
    top: 140px;
    width: 34px;
    height: 34px;
    border: 2px solid #f00;
    border-radius: 50%;
    background-color: #fff;
    box-shadow: 0 0 0 3px #fff, 1px 2px 6px 3px rgba(0, 0, 0, 0.5);
    font-family: "Inter", sans-serif;
    font-size: 26px;
    font-weight: 900;
    line-height: 30px;
    text-align: center;
    color: #f00;
}

.move-arrow {
    position: absolute;
    left: 537px;
    top: 137px;
    filter: drop-shadow(2px 2px 2px rgba(0, 0, 0, 0.5));
}

/* スクロール バー */
.vscroll {
    display: flex;
    flex-direction: column;
    width: 21px;
    padding: 2px 4px 0 2px;
}

.scroll-btn {
    flex: none;
    width: 15px;
    height: 15px;
    background-color: #fff;
    border: 1px solid #ababab;
}

.track {
    flex: 1;
    background-color: #dadada;
}

.thumb {
    background-color: #fff;
    border: 1px solid #ababab;
}

.vscroll .thumb {
    height: 50%;
}

.arrow-up, .arrow-down, .arrow-left, .arrow-right {
    border: 4px solid transparent;
}

.arrow-up {
    border-top: none;
    border-bottom-color: #666;
}

.arrow-down {
    border-bottom: none;
    border-top-color: #666;
}

.arrow-left {
    border-left: none;
    border-right-color: #666;
}

.arrow-right {
    border-right: none;
    border-left-color: #666;
}

/* シート見出し */
.sheet-bar {
    display: flex;
    align-items: center;
    flex: none;
    height: 27px;
    padding-right: 19px;
}

.sheet-nav {
    display: flex;
    gap: 12px;
    width: 100px;
    padding-left: 21px;
}

.sheet-nav button {
    width: 16px;
    height: 20px;
}

.sheet-nav .arrow-left {
    border-right-color: #b5b5b5;
}

.sheet-nav .arrow-right {
    border-left-color: #b5b5b5;
}

.sheet-tab {
    align-self: flex-start;
    height: 25px;
    padding: 0 14px;
    font-size: 13px;
    color: #444;
}

.sheet-tab.active {
    padding: 2px 12px 0;
    background-color: #fff;
    border-bottom: 2px solid #217346;
    color: #217346;
}

.sheet-sep {
    width: 1px;
    height: 20px;
    background-color: #999;
}

.add-sheet {
    margin-left: 34px;
}

.sheet-bar .dots {
    margin-left: auto;
    margin-right: 16px;
}

.hscroll {
    display: flex;
    flex: 0 0 38%;
    height: 15px;
}

.hscroll .track {
    margin-right: 3px;
}

.hscroll .thumb {
    width: 92%;
    height: 15px;
}

/* ステータス バー */
.status-bar {
    display: flex;
    align-items: center;
    flex: none;
    height: 22px;
    padding: 0 8px 0 7px;
    background-color: #f1f1f1;
    border-top: 1px solid #c6c6c6;
    color: #444;
}

.macro {
    margin-left: 20px;
}

.views {
    display: flex;
    align-self: stretch;
    margin-left: auto;
}

.view {
    width: 38px;
}

.view.active {
    background-color: #c6c6c6;
}

.zoom {
    display: flex;
    align-items: center;
    margin-left: 3px;
}

.zoom input {
    appearance: none;
    width: 101px;
    height: 11px;
    margin: 0 3px;
    background: linear-gradient(#aaa, #aaa) no-repeat center / 100% 1px;
}

.zoom input::-webkit-slider-thumb {
    appearance: none;
    width: 4px;
    height: 11px;
    background-color: #666;
}

.zoom-value {
    margin-left: 13px;
}
```
